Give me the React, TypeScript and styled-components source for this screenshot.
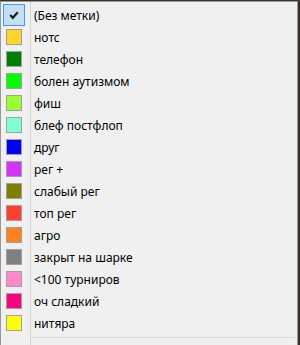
import styled, { createGlobalStyle } from 'styled-components';

const GlobalStyle = createGlobalStyle`
  html, body {
    margin: 0;
    padding: 0;
    background: #3a3421;
  }
  body {
    font-family: "Noto Sans", "Segoe UI", sans-serif;
  }
`;

const Menu = styled.div`
  margin-top: 1px;
  width: 298px;
  height: 360px;
  box-sizing: border-box;
  border: 1px solid #979797;
  border-bottom: none;
  padding: 2px 2px 0 2px;
  background:
    linear-gradient(to right, transparent 29px, #d5d5d5 29px, #d5d5d5 30px, transparent 30px),
    #f0f0f0;
`;

const Item = styled.div`
  display: flex;
  align-items: center;
  height: 22px;
  gap: 9px;
`;

const Gutter = styled.div<{ $checked?: boolean }>`
  width: 22px;
  height: 22px;
  box-sizing: border-box;
  display: flex;
  align-items: center;
  justify-content: center;
  ${(p) =>
    p.$checked &&
    `
    border: 1px solid #3d9cf0;
    background: #c3def5;
  `}
`;

const Swatch = styled.span<{ $color: string }>`
  width: 16px;
  height: 16px;
  box-sizing: border-box;
  border: 1px solid #a0a0a0;
  background: ${(p) => p.$color};
`;

const Label = styled.span`
  font-size: 12px;
  color: #000;
  white-space: nowrap;
`;

const Separator = styled.div`
  height: 1px;
  margin: 3px 0 0 28px;
  background: #d7d7d7;
`;

const Check = () => (
  <svg width="12" height="12" viewBox="0 0 12 12">
    <path d="M2.2 6 L4.8 8.8 L9.8 3.2" fill="none" stroke="#1e1e1e" strokeWidth="2.2" />
  </svg>
);

const tags: [string, string][] = [
  ['нотс', '#ffd52a'],
  ['телефон', '#008000'],
  ['болен аутизмом', '#00ff00'],
  ['фиш', '#99ff33'],
  ['блеф постфлоп', '#7fffd4'],
  ['друг', '#0000ff'],
  ['рег +', '#d633ff'],
  ['слабый рег', '#808000'],
  ['топ рег', '#ff3f33'],
  ['агро', '#ff8020'],
  ['закрыт на шарке', '#808080'],
  ['<100 турниров', '#ff88c8'],
  ['оч сладкий', '#ff0080'],
  ['нитяра', '#ffff00'],
];

export default function App() {
  return (
    <>
      <GlobalStyle />
      <Menu>
        <Item>
          <Gutter $checked>
            <Check />
          </Gutter>
          <Label>(Без метки)</Label>
        </Item>
        {tags.map(([name, color]) => (
          <Item key={name}>
            <Gutter>
              <Swatch $color={color} />
            </Gutter>
            <Label>{name}</Label>
          </Item>
        ))}
        <Separator />
      </Menu>
    </>
  );
}
